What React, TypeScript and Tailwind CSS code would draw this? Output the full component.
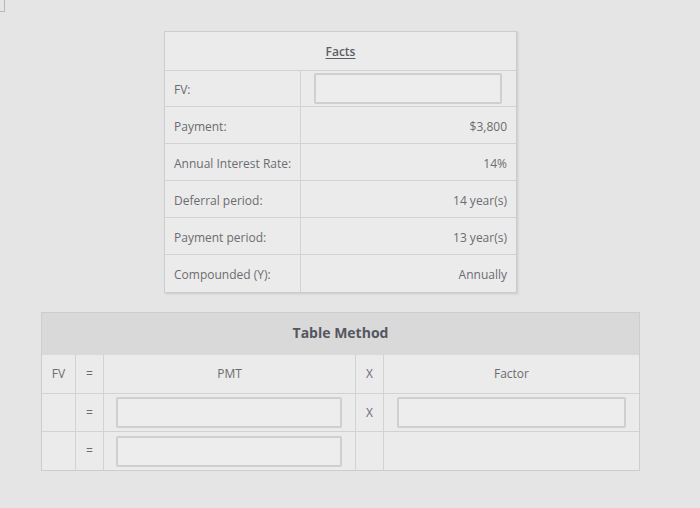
import React from "react";

const facts = [
  { label: "Payment:", value: "$3,800" },
  { label: "Annual Interest Rate:", value: "14%" },
  { label: "Deferral period:", value: "14 year(s)" },
  { label: "Payment period:", value: "13 year(s)" },
  { label: "Compounded (Y):", value: "Annually" },
];

const Box = ({ className }: { className: string }) => (
  <div className={`rounded-[2px] border-2 border-[#cfcfcf] bg-[#ededed] ${className}`} />
);

export default function App() {
  return (
    <div
      className="relative h-[508px] w-[700px] overflow-hidden bg-[#e5e5e5] text-[12px] text-[#6b6b70]"
      style={{ fontFamily: '"Open Sans", "Liberation Sans", sans-serif' }}
    >
      <div className="absolute left-0 top-0 h-[12px] w-[5px] border-b border-r border-[#b8b8b8]" />

      <div className="flex flex-col pt-[31px]">
        {/* Facts */}
        <div className="ml-[164px] w-[353px] border border-[#cdcdcd] bg-[#ebebeb] shadow-[1px_1px_2px_rgba(0,0,0,0.12)]">
          <div className="flex h-[39px] items-center justify-center border-b border-[#d2d2d2] pt-[2px]">
            <span className="font-semibold text-[#5c5d68] underline underline-offset-2">Facts</span>
          </div>
          <div className="grid grid-cols-[136px_1fr]">
            <div className="flex h-[36px] items-center border-b border-r border-[#d2d2d2] pl-[9px] pt-[2px]">FV:</div>
            <div className="flex h-[36px] items-center border-b border-[#d2d2d2] pl-[13px] pr-[14px]">
              <Box className="h-[31px] w-full" />
            </div>
            {facts.map((f, i) => (
              <React.Fragment key={f.label}>
                <div
                  className={`flex h-[37px] items-center border-r border-[#d2d2d2] pl-[9px] pt-[3px] ${
                    i < facts.length - 1 ? "border-b" : ""
                  }`}
                >
                  {f.label}
                </div>
                <div
                  className={`flex h-[37px] items-center justify-end border-[#d2d2d2] pr-[9px] pt-[3px] ${
                    i < facts.length - 1 ? "border-b" : ""
                  }`}
                >
                  {f.value}
                </div>
              </React.Fragment>
            ))}
          </div>
        </div>

        {/* Table Method */}
        <div className="ml-[41px] mt-[19px] w-[599px] border border-[#cdcdcd] bg-[#ebebeb]">
          <div className="flex h-[42px] items-center justify-center bg-[#d9d9d9] pb-[3px]">
            <span className="text-[14px] font-bold text-[#55565f]">Table Method</span>
          </div>
          <div className="grid grid-cols-[34px_28px_252px_28px_1fr]">
            <div className="flex h-[39px] items-center justify-center border-b border-r border-[#d2d2d2]">FV</div>
            <div className="flex h-[39px] items-center justify-center border-b border-r border-[#d2d2d2]">=</div>
            <div className="flex h-[39px] items-center justify-center border-b border-r border-[#d2d2d2]">PMT</div>
            <div className="flex h-[39px] items-center justify-center border-b border-r border-[#d2d2d2]">X</div>
            <div className="flex h-[39px] items-center justify-center border-b border-[#d2d2d2]">Factor</div>

            <div className="h-[38px] border-b border-r border-[#d2d2d2]" />
            <div className="flex h-[38px] items-center justify-center border-b border-r border-[#d2d2d2]">=</div>
            <div className="flex h-[38px] items-center border-b border-r border-[#d2d2d2] pl-[12px] pr-[13px]">
              <Box className="h-[31px] w-full" />
            </div>
            <div className="flex h-[38px] items-center justify-center border-b border-r border-[#d2d2d2]">X</div>
            <div className="flex h-[38px] items-center border-b border-[#d2d2d2] pl-[13px] pr-[13px]">
              <Box className="h-[31px] w-full" />
            </div>

            <div className="h-[38px] border-r border-[#d2d2d2]" />
            <div className="flex h-[38px] items-center justify-center border-r border-[#d2d2d2]">=</div>
            <div className="flex h-[38px] items-center border-r border-[#d2d2d2] pl-[12px] pr-[13px]">
              <Box className="h-[31px] w-full" />
            </div>
            <div className="h-[38px] border-r border-[#d2d2d2]" />
            <div className="h-[38px]" />
          </div>
        </div>
      </div>
    </div>
  );
}
